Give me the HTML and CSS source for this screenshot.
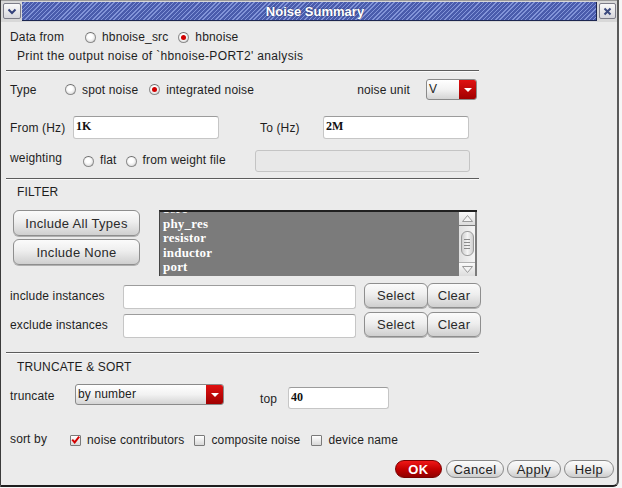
FILE: index.html
```html
<!DOCTYPE html>
<html>
<head>
<meta charset="utf-8">
<link rel="stylesheet" href="styles.css">
</head>
<body>
<div class="window">
  <div class="titlebar">
    <div class="tbtn menu-btn">
      <svg width="10" height="7" viewBox="0 0 10 7"><path d="M1.5 1.5 L5 5 L8.5 1.5" fill="none" stroke="#33407a" stroke-width="2"/></svg>
    </div>
    <div class="tstripe"><span class="title">Noise Summary</span></div>
    <div class="tbtn close-btn">
      <svg width="9" height="9" viewBox="0 0 9 9"><path d="M1.5 1.5 L7.5 7.5 M7.5 1.5 L1.5 7.5" stroke="#3c4a7e" stroke-width="2"/></svg>
    </div>
  </div>

  <div class="content">
    <div class="row r-data">
      <span class="lbl w76">Data from</span>
      <span class="radio"></span><span class="opt gap10">hbnoise_src</span>
      <span class="radio on"></span><span class="opt">hbnoise</span>
    </div>
    <div class="row r-print"><span class="indent wide">Print the output noise of `hbnoise-PORT2' analysis</span></div>
    <div class="sep s1"></div>

    <div class="row r-type">
      <span class="lbl w55">Type</span>
      <span class="radio"></span><span class="opt gap11">spot noise</span>
      <span class="radio on"></span><span class="opt">integrated noise</span>
      <span class="unit-group">
        <span class="lbl">noise unit</span>
        <span class="combo c-unit"><span class="combo-text">V</span><span class="combo-arrow"></span></span>
      </span>
    </div>

    <div class="row r-freq">
      <span class="lbl w63">From (Hz)</span>
      <span class="field f-freq">1K</span>
      <span class="lbl w63 ml41">To (Hz)</span>
      <span class="field f-freq">2M</span>
    </div>

    <div class="row r-weight">
      <span class="lbl w73 up3">weighting</span>
      <span class="radio"></span><span class="opt gap9 up1">flat</span>
      <span class="radio"></span><span class="opt up1">from weight file</span>
      <span class="field f-disabled"></span>
    </div>
    <div class="sep s2"></div>

    <div class="row r-head h-filter"><span class="indent">FILTER</span></div>

    <div class="filter">
      <div class="btncol">
        <span class="btn b-wide">Include All Types</span>
        <span class="btn b-wide">Include None</span>
      </div>
      <div class="list">
        <div class="list-items">
          <div class="item cut">bsrc</div>
          <div class="item">phy_res</div>
          <div class="item">resistor</div>
          <div class="item">inductor</div>
          <div class="item">port</div>
        </div>
        <div class="scrollbar">
          <span class="sb-arrow"><svg width="11" height="7" viewBox="0 0 11 7"><path d="M0.5 6.5 L5.5 0.5 L10.5 6.5 Z" fill="#f4f4f4" stroke="#9a9a9a"/></svg></span>
          <span class="sb-thumb"><i></i><i></i><i></i><i></i></span>
          <span class="sb-arrow down"><svg width="11" height="7" viewBox="0 0 11 7"><path d="M0.5 0.5 L5.5 6.5 L10.5 0.5 Z" fill="#f4f4f4" stroke="#9a9a9a"/></svg></span>
        </div>
      </div>
    </div>

    <div class="row r-inst r-inc">
      <span class="lbl w113">include instances</span>
      <span class="field f-inst"></span>
      <span class="btn b-sel">Select</span><span class="btn b-clr">Clear</span>
    </div>
    <div class="row r-inst r-exc">
      <span class="lbl w113">exclude instances</span>
      <span class="field f-inst"></span>
      <span class="btn b-sel">Select</span><span class="btn b-clr">Clear</span>
    </div>
    <div class="sep s3"></div>

    <div class="row r-head h-trunc"><span class="indent">TRUNCATE &amp; SORT</span></div>

    <div class="row r-trunc">
      <span class="lbl w65">truncate</span>
      <span class="combo c-trunc"><span class="combo-text">by number</span><span class="combo-arrow"></span></span>
      <span class="lbl ml36 down3 w28">top</span>
      <span class="field f-top">40</span>
    </div>

    <div class="row r-sort">
      <span class="lbl w60 up1">sort by</span>
      <span class="check on"><svg width="11" height="10" viewBox="0 0 11 10"><path d="M1.5 4.5 L4.5 8 L10 1" fill="none" stroke="#d40000" stroke-width="2.4"/></svg></span><span class="opt gap10">noise contributors</span>
      <span class="check"></span><span class="opt gap11">composite noise</span>
      <span class="check"></span><span class="opt">device name</span>
    </div>

    <div class="actions">
      <span class="pill ok">OK</span>
      <span class="pill">Cancel</span>
      <span class="pill">Apply</span>
      <span class="pill">Help</span>
    </div>
  </div>
</div>
</body>
</html>
```

FILE: styles.css
```css
html, body {
  margin: 0;
  padding: 0;
  background: #f6f6f6;
}
body {
  width: 622px;
  height: 488px;
  overflow: hidden;
  font-family: "Liberation Sans", Arial, sans-serif;
  font-size: 12px;
  letter-spacing: 0.15px;
  color: #1e1e1e;
}
.window {
  width: 619px;
  height: 487px;
  box-sizing: border-box;
  background: #ebebeb;
  border-left: 1px solid #3a3a3a;
  border-right: 2px solid #5a5a5a;
  border-bottom: 2px solid #1e1e1e;
  border-bottom-right-radius: 6px;
  display: flex;
  flex-direction: column;
}

/* title bar */
.titlebar {
  height: 22px;
  box-sizing: border-box;
  display: flex;
  align-items: stretch;
  padding: 1px 0 1px 2px;
  background: #d8d8d8;
  border-top: 1px solid #9a9a9a;
  letter-spacing: 0;
}
.tbtn {
  width: 18px;
  box-sizing: border-box;
  margin: 1px 1px 2px 0;
  border: 1px solid #7c7c88;
  border-radius: 2px;
  background: linear-gradient(#fafafa, #d6d6dc);
  display: flex;
  align-items: center;
  justify-content: center;
}
.close-btn {
  width: 17px;
  margin: 1px 1px 2px 2px;
}
.tstripe {
  flex: 1;
  border-bottom: 1px solid #1c2650;
  border-right: 1px solid #1c2650;
  background: repeating-linear-gradient(135deg, #4a5cac 0px, #4a5cac 2px, #8294d8 2px, #8294d8 3px);
  display: flex;
  align-items: center;
  justify-content: center;
}
.title {
  font-weight: bold;
  font-size: 13px;
  color: #ffffff;
  text-shadow: 0 0 2px #26305e;
  padding: 0 2px;
  margin-left: 12px;
}

/* content */
.content {
  flex: 1;
  padding-left: 9px;
  display: flex;
  flex-direction: column;
}
.row {
  display: flex;
  align-items: center;
  white-space: nowrap;
  width: 467px;
}
.row > * { flex-shrink: 0; }
.lbl { display: inline-block; }
.w55 { width: 55px; }
.w60 { width: 60px; }
.w63 { width: 63px; }
.w65 { width: 65px; }
.w73 { width: 73px; }
.w76 { width: 75px; }
.w113 { width: 113px; }
.w28 { width: 28px; }
.ml41 { margin-left: 41px; }
.ml36 { margin-left: 36px; }
.up1 { position: relative; top: -1px; }
.up3 { position: relative; top: -3px; }
.down3 { position: relative; top: 3px; }
.indent { padding-left: 7px; }
.wide { letter-spacing: 0.35px; }
.opt { margin-left: 6px; }
.gap9 { margin-right: 9px; }
.gap10 { margin-right: 10px; }
.gap11 { margin-right: 11px; }

.r-data { margin-top: 6px; height: 18px; }
.r-print { margin-top: 2px; height: 16px; }
.r-type { margin-top: 7px; height: 21px; }
.r-freq { margin-top: 16px; height: 23px; }
.r-weight { margin-top: 11px; height: 22px; }
.h-filter { margin-top: 4px; height: 16px; }
.r-inc { margin-top: 7px; height: 26px; }
.r-exc { margin-top: 3px; height: 26px; }
.h-trunc { margin-top: 5px; height: 16px; }
.r-trunc { margin-top: 9px; height: 25px; align-items: flex-start; }
.r-trunc .lbl { margin-top: 5px; }
.r-sort { margin-top: 22px; height: 18px; }

.sep {
  height: 1px;
  width: 473px;
  margin-left: -4px;
  background: #5c5c5c;
  border-bottom: 1px solid #fbfbfb;
}
.s1 { margin-top: 6px; }
.s2 { margin-top: 6px; }
.s3 { margin-top: 14px; }

/* radios and checks */
.radio {
  width: 11px;
  height: 11px;
  box-sizing: border-box;
  border-radius: 50%;
  border: 1px solid #8c8c8c;
  border-top-color: #6e6e6e;
  background: radial-gradient(circle at 45% 40%, #ffffff 30%, #cfcfcf 100%);
  display: inline-flex;
  align-items: center;
  justify-content: center;
}
.radio.on::after {
  content: "";
  width: 5px;
  height: 5px;
  border-radius: 50%;
  background: #d00000;
}
.check {
  width: 11px;
  height: 11px;
  box-sizing: border-box;
  border: 1px solid #7a7a7a;
  border-radius: 1px;
  background: linear-gradient(#ffffff, #d8d8d8);
  display: inline-flex;
  align-items: center;
  justify-content: center;
  overflow: visible;
}
.check svg { margin-top: -1px; }

/* combos */
.unit-group {
  margin-left: auto;
  display: flex;
  align-items: center;
  gap: 16px;
}
.combo {
  display: inline-flex;
  box-sizing: border-box;
  border: 1px solid #8a8a8a;
  border-radius: 3px;
  background: linear-gradient(#ffffff 0%, #f2f2f2 50%, #d4d4d4 100%);
  overflow: hidden;
  height: 21px;
}
.c-unit { width: 51px; }
.c-trunc { width: 149px; }
.combo-text {
  flex: 1;
  padding-left: 2px;
  line-height: 18px;
  color: #222;
}
.combo-arrow {
  width: 17px;
  background: linear-gradient(#e01010, #a00000);
  display: flex;
  align-items: center;
  justify-content: center;
}
.combo-arrow::after {
  content: "";
  border-left: 4px solid transparent;
  border-right: 4px solid transparent;
  border-top: 4px solid #ffffff;
}

/* text fields */
.field {
  display: inline-block;
  box-sizing: border-box;
  background: #ffffff;
  border: 1px solid #c6c6c6;
  border-top-color: #9c9c9c;
  border-radius: 3px;
  font-family: "Liberation Serif", "Times New Roman", serif;
  font-weight: bold;
  font-size: 12px;
  letter-spacing: 0;
  padding-left: 2px;
  line-height: 19px;
  color: #111;
}
.f-freq { width: 146px; height: 23px; }
.f-disabled {
  width: 215px;
  height: 22px;
  margin-left: auto;
  margin-right: 7px;
  background: #e8e8e8;
  border-color: #c4c4c4;
}
.f-inst { width: 233px; height: 24px; margin-top: 2px; margin-right: 8px; }
.f-top { width: 101px; height: 22px; margin-top: 3px; }

/* buttons */
.btn {
  display: inline-flex;
  align-items: center;
  justify-content: center;
  box-sizing: border-box;
  border: 1px solid #8e8e8e;
  border-radius: 6px;
  background: linear-gradient(#fbfbfb 0%, #eeeeee 45%, #cfcfcf 100%);
  box-shadow: 0 1px 0 #b0b0b0;
  color: #2a2a2a;
  font-size: 13px;
  letter-spacing: 0.3px;
}
.b-wide { width: 127px; height: 26px; }
.b-sel { width: 64px; height: 25px; margin-top: -1px; }
.b-clr { width: 54px; height: 25px; margin-top: -1px; margin-left: -1px; }

.filter {
  margin-top: 10px;
  height: 66px;
  display: flex;
  width: 467px;
}
.btncol {
  margin-left: 3px;
  display: flex;
  flex-direction: column;
  gap: 3px;
}
.list {
  margin-left: 19px;
  width: 318px;
  height: 66px;
  box-sizing: border-box;
  border-top: 2px solid #202020;
  border-left: 1px solid #444;
  background: #7b7b7b;
  display: flex;
  overflow: hidden;
}
.list-items {
  flex: 1;
  padding-left: 3px;
  overflow: hidden;
}
.item {
  font-family: "Liberation Serif", "Times New Roman", serif;
  font-weight: bold;
  font-size: 13px;
  letter-spacing: 0.2px;
  line-height: 14.5px;
  color: #ffffff;
}
.item.cut { margin-top: -10px; }
.scrollbar {
  width: 16px;
  margin-right: 2px;
  background: linear-gradient(90deg, #e0e0e0, #f6f6f6);
  display: flex;
  flex-direction: column;
  align-items: center;
}
.sb-arrow {
  width: 16px;
  height: 14px;
  box-sizing: border-box;
  border-bottom: 1px solid #7a7a7a;
  background: linear-gradient(#fafafa, #dcdcdc);
  display: flex;
  align-items: center;
  justify-content: center;
}
.sb-arrow.down {
  margin-top: auto;
  border-bottom: none;
  border-top: 1px solid #b0b0b0;
}
.sb-thumb {
  margin-top: 5px;
  width: 13px;
  height: 25px;
  box-sizing: border-box;
  border: 1px solid #9a9a9a;
  border-radius: 6px;
  background: linear-gradient(90deg, #cfcfcf, #f4f4f4 50%, #cfcfcf);
  display: flex;
  flex-direction: column;
  align-items: center;
  justify-content: center;
  gap: 2px;
}
.sb-thumb i {
  display: block;
  width: 6px;
  height: 1px;
  background: #8a8a8a;
}

/* bottom actions */
.actions {
  margin-top: 11px;
  display: flex;
  justify-content: flex-end;
  gap: 3px;
  padding-right: 3px;
}
.pill {
  display: inline-flex;
  align-items: center;
  justify-content: center;
  box-sizing: border-box;
  height: 18px;
  border: 1px solid #8a8a8a;
  border-radius: 9px;
  background: linear-gradient(#fbfbfb 0%, #ececec 50%, #cdcdcd 100%);
  font-size: 13px;
  letter-spacing: 0.4px;
  color: #222;
  padding: 0 6px;
}
.pill:nth-child(2) { width: 58px; }
.pill:nth-child(3) { width: 54px; }
.pill:nth-child(4) { width: 50px; }
.pill.ok {
  width: 47px;
  margin-right: 1px;
  border-color: #7a0000;
  background: linear-gradient(#f01818 0%, #c40000 50%, #900000 100%);
  color: #ffffff;
  font-weight: bold;
}
```
